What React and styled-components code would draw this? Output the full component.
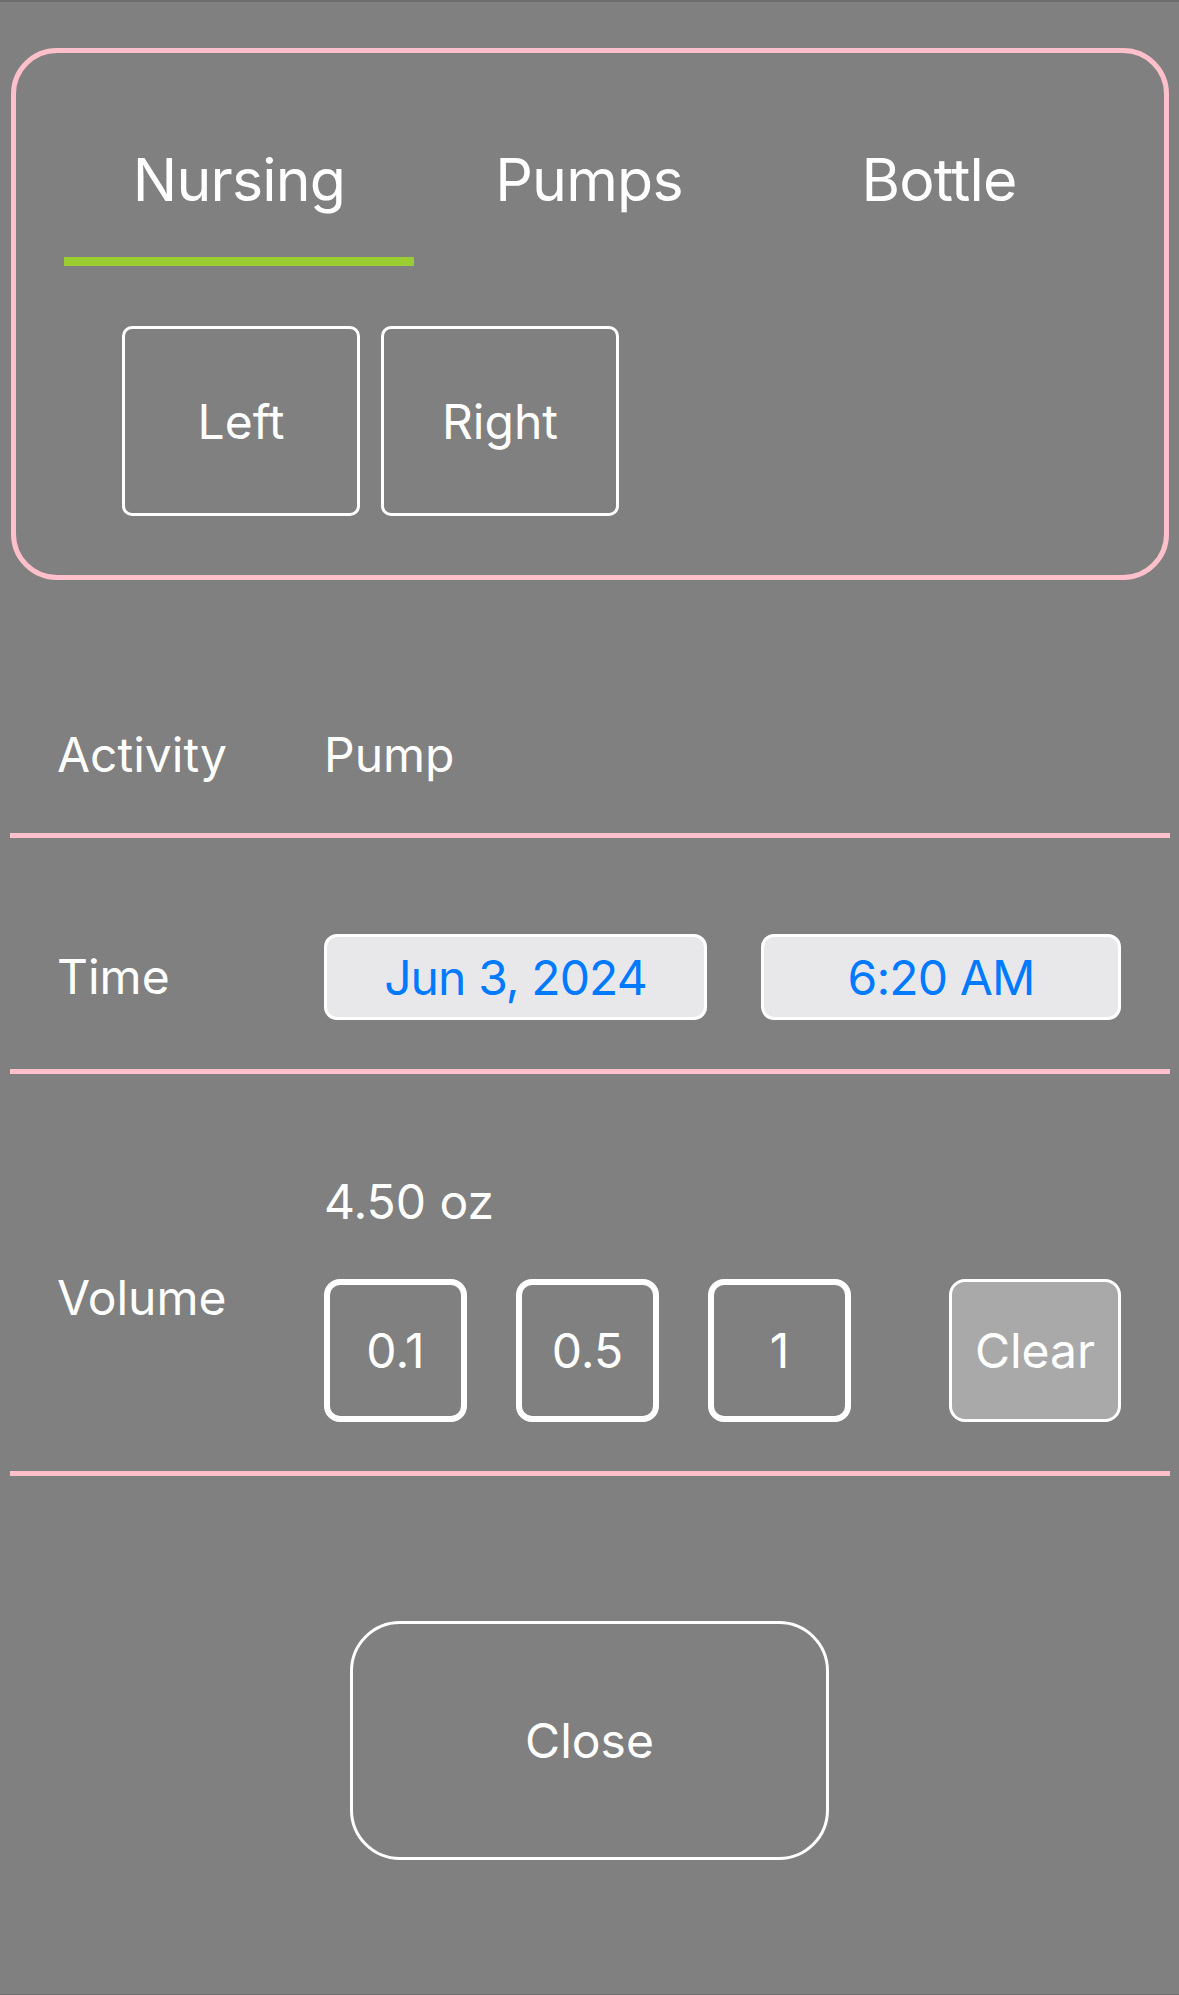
import React, { useState } from "react";
import styled, { createGlobalStyle } from "styled-components";

const GlobalStyle = createGlobalStyle`
  html, body {
    margin: 0;
    padding: 0;
    background: #808080;
  }
  body {
    font-family: Inter, "Noto Sans", "Liberation Sans", sans-serif;
    color: #ffffff;
    -webkit-font-smoothing: antialiased;
  }
  * { box-sizing: border-box; }
`;

const Page = styled.div`
  min-height: 100vh;
  background: #808080;
  border-top: 2px solid #6e6e6e;
  border-bottom: 1px solid #6e6e6e;
  padding-top: 46px;
`;

const Card = styled.section`
  margin: 0 10px 0 11px;
  border: 5px solid #ffc0cb;
  border-radius: 46px;
  padding: 91px 50px 59px 48px;
`;

const Tabs = styled.div`
  display: grid;
  grid-template-columns: repeat(3, 1fr);
`;

const Tab = styled.button`
  font: inherit;
  background: transparent;
  border: 0;
  padding: 0;
  color: #ffffff;
  display: flex;
  flex-direction: column;
  align-items: stretch;
  cursor: pointer;
`;

const TabLabel = styled.span`
  font-size: 59px;
  line-height: 72px;
  text-align: center;
  letter-spacing: -0.8px;
`;

const TabBar = styled.span`
  margin-top: 41px;
  height: 9px;
  background: ${(p) => (p.$active ? "#9acd32" : "transparent")};
`;

const SideRow = styled.div`
  display: flex;
  gap: 21px;
  margin-top: 60px;
  padding-left: 58px;
`;

const SideButton = styled.button`
  font: inherit;
  font-size: 48px;
  width: 238px;
  height: 190px;
  border: 3px solid #ffffff;
  border-radius: 10px;
  background: transparent;
  color: #ffffff;
  display: flex;
  align-items: center;
  justify-content: center;
`;

const Form = styled.div`
  margin: 0 9px 0 10px;
`;

const Row = styled.div`
  display: flex;
  align-items: center;
  border-bottom: 5px solid #ffc0cb;
  padding: ${(p) => p.$top}px 49px 49px 47px;
`;

const Label = styled.div`
  width: 267px;
  flex-shrink: 0;
  font-size: 48px;
  line-height: 58px;
`;

const Value = styled.div`
  font-size: 48px;
  line-height: 58px;
`;

const Pickers = styled.div`
  flex: 1;
  display: flex;
  gap: 54px;
`;

const Picker = styled.button`
  font: inherit;
  font-size: 48px;
  letter-spacing: -0.9px;
  width: ${(p) => p.$w}px;
  height: 86px;
  border: 3px solid #ffffff;
  border-radius: 13px;
  background: #e8e8ea;
  color: #007aff;
  display: flex;
  align-items: center;
  justify-content: center;
  padding: 0;
`;

const VolumeArea = styled.div`
  flex: 1;
  display: flex;
  flex-direction: column;
`;

const Steps = styled.div`
  display: flex;
  gap: 49px;
  margin-top: 48px;
`;

const StepButton = styled.button`
  font: inherit;
  font-size: 48px;
  width: ${(p) => (p.$clear ? 172 : 143)}px;
  height: 143px;
  margin-left: ${(p) => (p.$clear ? "auto" : "0")};
  border: ${(p) => (p.$clear ? 3 : 6)}px solid #ffffff;
  border-radius: 16px;
  background: ${(p) => (p.$clear ? "#a9a9a9" : "transparent")};
  color: #ffffff;
  display: flex;
  align-items: center;
  justify-content: center;
  padding: 0;
`;

const CloseButton = styled.button`
  font: inherit;
  font-size: 48px;
  display: flex;
  align-items: center;
  justify-content: center;
  width: 479px;
  height: 239px;
  margin: 145px auto 0;
  border: 3px solid #ffffff;
  border-radius: 50px;
  background: transparent;
  color: #ffffff;
`;

export default function App() {
  const [tab, setTab] = useState(0);
  const tabs = ["Nursing", "Pumps", "Bottle"];
  return (
    <>
      <GlobalStyle />
      <Page>
        <Card>
          <Tabs>
            {tabs.map((t, i) => (
              <Tab key={t} onClick={() => setTab(i)}>
                <TabLabel>{t}</TabLabel>
                <TabBar $active={tab === i} />
              </Tab>
            ))}
          </Tabs>
          <SideRow>
            <SideButton>Left</SideButton>
            <SideButton>Right</SideButton>
          </SideRow>
        </Card>
        <Form>
          <Row $top={146}>
            <Label>Activity</Label>
            <Value>Pump</Value>
          </Row>
          <Row $top={96}>
            <Label>Time</Label>
            <Pickers>
              <Picker $w={383}>Jun 3, 2024</Picker>
              <Picker $w={360}>6:20 AM</Picker>
            </Pickers>
          </Row>
          <Row $top={99}>
            <Label>Volume</Label>
            <VolumeArea>
              <Value>4.50 oz</Value>
              <Steps>
                <StepButton>0.1</StepButton>
                <StepButton>0.5</StepButton>
                <StepButton>1</StepButton>
                <StepButton $clear>Clear</StepButton>
              </Steps>
            </VolumeArea>
          </Row>
        </Form>
        <CloseButton>Close</CloseButton>
      </Page>
    </>
  );
}
